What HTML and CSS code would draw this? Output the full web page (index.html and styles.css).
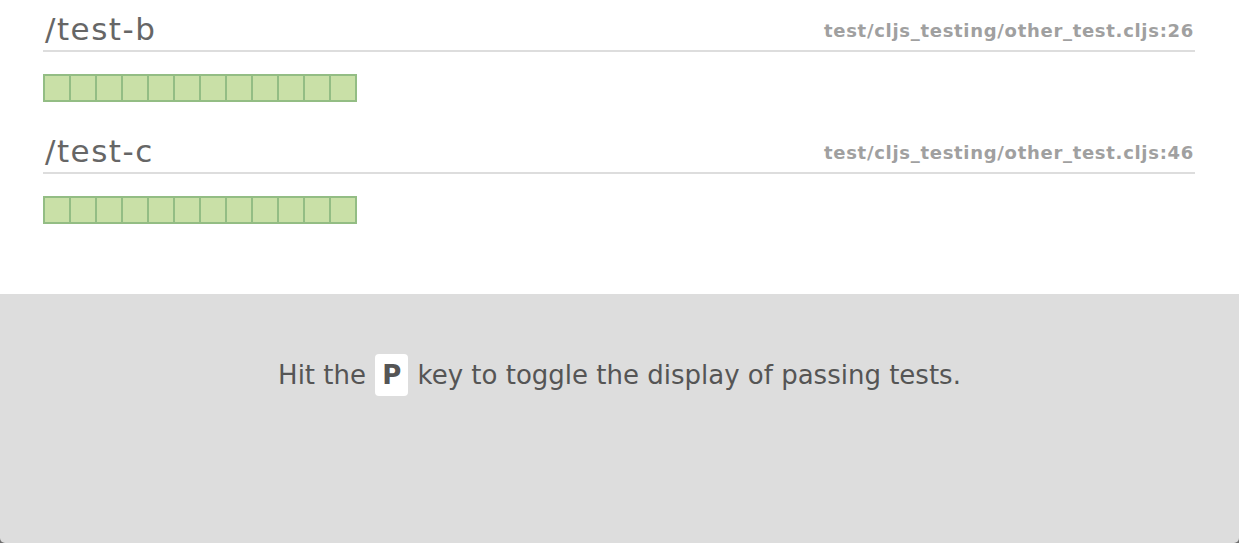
FILE: index.html
```html
<!DOCTYPE html>
<html>
<head>
<meta charset="utf-8">
<link rel="stylesheet" href="styles.css">
</head>
<body>
<div class="page">
<div class="results">
  <div class="test">
    <div class="test-head">
      <h2 class="test-name">/test-b</h2>
      <span class="test-file">test/cljs_testing/other_test.cljs:26</span>
    </div>
    <div class="asserts">
      <span class="cell"></span><span class="cell"></span><span class="cell"></span><span class="cell"></span><span class="cell"></span><span class="cell"></span><span class="cell"></span><span class="cell"></span><span class="cell"></span><span class="cell"></span><span class="cell"></span><span class="cell"></span>
    </div>
  </div>
  <div class="test">
    <div class="test-head">
      <h2 class="test-name">/test-c</h2>
      <span class="test-file">test/cljs_testing/other_test.cljs:46</span>
    </div>
    <div class="asserts">
      <span class="cell"></span><span class="cell"></span><span class="cell"></span><span class="cell"></span><span class="cell"></span><span class="cell"></span><span class="cell"></span><span class="cell"></span><span class="cell"></span><span class="cell"></span><span class="cell"></span><span class="cell"></span>
    </div>
  </div>
</div>
<div class="footer">
  <p class="hint">Hit the <kbd class="key">P</kbd> key to toggle the display of passing tests.</p>
</div>
</div>
</body>
</html>
```
FILE: styles.css
```css
html {
  margin: 0;
  padding: 0;
  height: 100%;
  background: #6e6e6e;
}
body {
  margin: 0;
  padding: 0;
  height: 100%;
  font-family: "DejaVu Sans", Verdana, sans-serif;
  overflow: hidden;
}
.page {
  height: 100%;
  display: flex;
  flex-direction: column;
}
.results {
  height: 294px;
  flex: none;
  padding: 0 44px 0 43px;
  box-sizing: border-box;
  background: #fff;
}
.test + .test {
  margin-top: 20px;
}
.test-head {
  display: flex;
  justify-content: space-between;
  align-items: flex-end;
  border-bottom: 2px solid #dddddd;
  padding: 0 1px 3px 2px;
  height: 52px;
  box-sizing: border-box;
}
.test-name {
  margin: 0;
  font-size: 31px;
  font-weight: normal;
  color: #666;
  line-height: 36px;
  letter-spacing: 1.5px;
}
.test-file {
  font-size: 18px;
  line-height: 21px;
  color: #a0a0a0;
  font-weight: bold;
  letter-spacing: 0.7px;
  margin-bottom: 6px;
}
.asserts {
  display: flex;
  margin-top: 22px;
}
.cell {
  width: 24px;
  height: 24px;
  border: 2px solid #93bd84;
  background: #c9e0a7;
  margin-right: -2px;
}
.footer {
  flex: 1;
  background: #dddddd;
  display: flex;
  justify-content: center;
  padding-top: 60px;
  box-sizing: border-box;
  border-radius: 0 0 5px 5px;
}
.hint {
  margin: 0;
  font-size: 26px;
  color: #555;
}
.key {
  display: inline-block;
  font-family: inherit;
  font-weight: bold;
  background: #fff;
  border-radius: 4px;
  padding: 8px 7px;
  line-height: 26px;
  margin: 0 1px;
}
```
